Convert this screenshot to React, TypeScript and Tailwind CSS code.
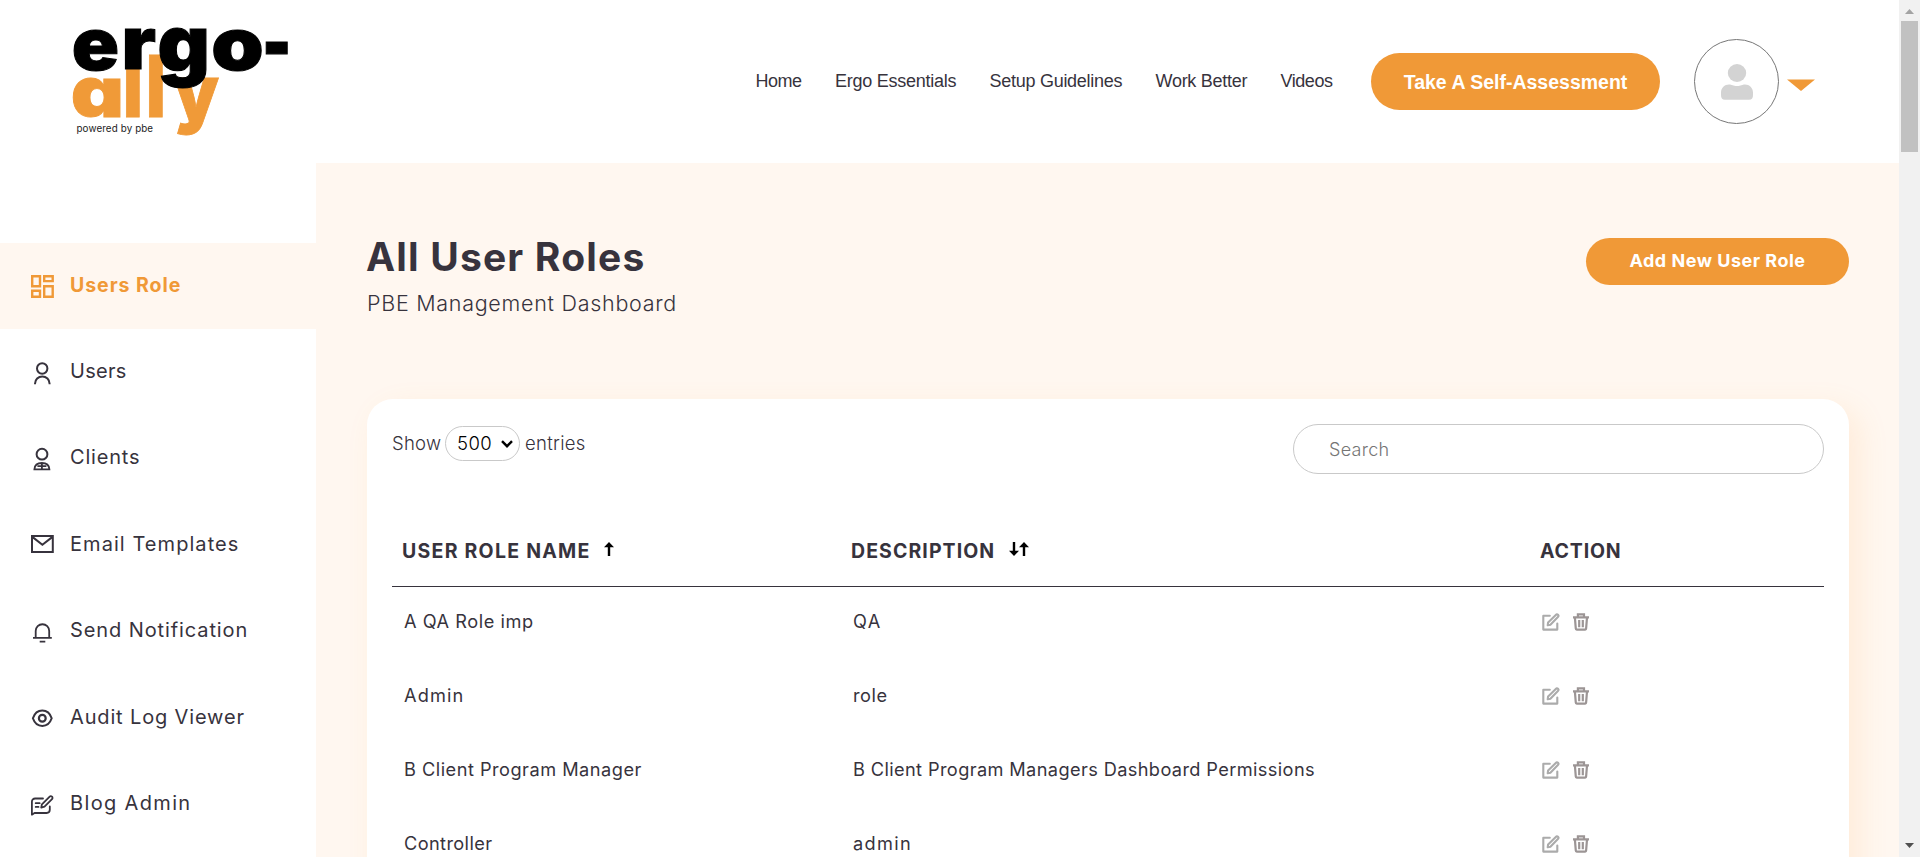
import type { ReactNode } from "react";

const Logo = () => (
  <svg width="240" height="130" viewBox="60 15 240 130" className="block overflow-visible font-['Inter'] font-black [font-feature-settings:'cv11']" role="img" aria-label="ergo-ally">
    <g fill="#f09a38" stroke="#f09a38" strokeWidth="0.8">
      <text transform="translate(70.8 117) scale(1.18 1)" fontSize="70">a</text>
      <text transform="translate(123 116.600) scale(.79 1.010)" fontSize="84">l</text>
      <text transform="translate(146 116.600) scale(.79 1.010)" fontSize="84">l</text>
      <text transform="translate(174 119.300) scale(1.01 1.08)" fontSize="70">y</text>
    </g>
    <g fill="#000" stroke="#000" strokeWidth="1">
      <text transform="translate(71.8 69.800) scale(1.070 1)" fontSize="73">e</text>
      <text transform="translate(121.4 69.200) scale(1.09 1)" fontSize="73">r</text>
      <text transform="translate(157.6 71.300) scale(1.11 1.06)" fontSize="73">g</text>
      <text transform="translate(211.2 69.800) scale(1.15 1)" fontSize="73">o</text>
      <text transform="translate(262 71.300) scale(.85 1.1)" fontSize="73">-</text>
    </g>
    <text x="76.5" y="131.800" fontSize="9.800" fontWeight="400" letterSpacing="0.120" fill="#222" className="[font-feature-settings:normal]">powered by pbe</text>
  </svg>
);

const Glyph = ({ children }: { children: ReactNode }) => (
  <svg width="24" height="24" viewBox="0 0 24 24" fill="none" stroke="currentColor" strokeWidth="2" className="shrink-0">
    {children}
  </svg>
);

const menu: { label: string; tracking: string; icon: ReactNode }[] = [
  {
    label: "Users Role",
    tracking: "tracking-[0.95px]",
    icon: (
      <Glyph>
        <path strokeWidth="2.4" d="M2.200 2.200h7.800v10H2.200zM14.200 2.200h8.500v4.900h-8.500zM2.200 16.800h7.800v5.900H2.200zM14.200 12.200h8.500v10.500h-8.500z" />
      </Glyph>
    ),
  },
  {
    label: "Users",
    tracking: "tracking-[0.3px]",
    icon: (
      <Glyph>
        <circle cx="12.2" cy="7.500" r="5.200" />
        <path d="M5 23.300v-.6a7.300 7.300 0 0 1 14.600 0v.6" />
      </Glyph>
    ),
  },
  {
    label: "Clients",
    tracking: "tracking-[0.800px]",
    icon: (
      <Glyph>
        <circle cx="12" cy="7.200" r="5.400" />
        <path d="M4.400 22.300c.3-4 3.200-6.300 7.500-6.300s7.200 2.300 7.500 6.300zM11.900 16v6M7.400 19.200h9" strokeWidth="1.800" />
      </Glyph>
    ),
  },
  {
    label: "Email Templates",
    tracking: "tracking-[1.060px]",
    icon: (
      <Glyph>
        <path d="M2 3.100h20.800v15.900H2zM2 3.600l10.400 8.200 10.400-8.200" />
      </Glyph>
    ),
  },
  {
    label: "Send Notification",
    tracking: "tracking-[0.900px]",
    icon: (
      <Glyph>
        <path d="M5.700 17.900V11a6.700 6.700 0 0 1 13.500 0v6.900M3 17.900h18.800M9.700 21.700h5.600" strokeWidth="1.800" />
      </Glyph>
    ),
  },
  {
    label: "Audit Log Viewer",
    tracking: "tracking-[0.850px]",
    icon: (
      <Glyph>
        <path d="M2.900 12.200C4.400 7.800 8 4.500 12.300 4.500s7.900 3.300 9.400 7.700c-1.500 4.400-5.100 7.700-9.400 7.700S4.400 16.600 2.900 12.200z" />
        <circle cx="12.300" cy="12.200" r="3.400" strokeWidth="2.200" />
      </Glyph>
    ),
  },
  {
    label: "Blog Admin",
    tracking: "tracking-[1.350px]",
    icon: (
      <Glyph>
        <path strokeLinecap="round" strokeLinejoin="round" strokeWidth="1.800" d="M13 5.500H5.100a3.200 3.200 0 0 0-3.200 3.200v13l2.600-1.700h12.100a3.200 3.200 0 0 0 3.200-3.200v-3.400M5.700 10.200h4M5.700 13.900h2.800M11.200 14.600l.7-3.300 7.500-7.500c.8-.8 1.900-.8 2.600-.1s.7 1.800 0 2.500l-7.500 7.500z" />
      </Glyph>
    ),
  },
];

const links = [
  { label: "Home", cls: "w-[79.5px] tracking-[-0.5px]" },
  { label: "Ergo Essentials", cls: "w-[154.5px] tracking-[-0.26px]" },
  { label: "Setup Guidelines", cls: "w-[166px] tracking-[-0.27px]" },
  { label: "Work Better", cls: "w-[125px] tracking-[-0.27px]" },
  { label: "Videos", cls: "w-[90.5px] tracking-[-0.44px]" },
];

const rows = [
  { name: "A QA Role imp", nt: "tracking-[0.550px]", desc: "QA", dt: "tracking-[1.5px]" },
  { name: "Admin", nt: "tracking-[1.1px]", desc: "role", dt: "tracking-[0.550px]" },
  { name: "B Client Program Manager", nt: "tracking-[0.490px]", desc: "B Client Program Managers Dashboard Permissions", dt: "tracking-[0.380px]" },
  { name: "Controller", nt: "tracking-[0.380px]", desc: "admin", dt: "tracking-[1.3px]" },
];

const EditIcon = () => (
  <svg width="18" height="18" viewBox="0 0 18 18" fill="none" stroke="#ababab" strokeWidth="2.100" strokeLinejoin="round" strokeLinecap="round">
    <path d="M7.800 2.800H1.300v13.800h14V10.500" />
    <path d="M5.700 12.300l.4-2.900 7.700-7.500c.7-.7 1.600-.7 2.200-.1s.6 1.500-.1 2.200l-7.500 7.700z" />
  </svg>
);

const TrashIcon = () => (
  <svg width="16" height="18" viewBox="0 0 16 18" fill="none" stroke="#9c9595" strokeWidth="2.200">
    <path d="M0 4.400h16M4.900 4V1.400h6.100V4M1.900 4.600l.9 11c0 .6.400 1 .9 1h8.500c.5 0 .9-.4.9-1l.9-11M6.200 7v7.200M9.800 7v7.200" />
  </svg>
);

const Arrow = ({ down = false }: { down?: boolean }) => (
  <svg width="10" height="14" viewBox="0 0 10 14" className={down ? "rotate-180" : ""}>
    <path d="M5 0l5 5.300H6.200V14H3.800V5.300H0z" fill="#000" />
  </svg>
);

export default function App() {
  return (
    <div className="flex h-[857px] w-full overflow-hidden bg-white font-['Inter',sans-serif] text-[#37333d]">
      <div className="flex min-w-0 flex-1 flex-col">
        <header className="flex h-[163px] shrink-0 items-center bg-white">
          <div className="ml-[60px] w-[240px] self-start pt-[15px]">
            <Logo />
          </div>
          <nav className="ml-[455.5px] flex pb-0.5 font-['Liberation_Sans',sans-serif] text-[18px] leading-6 whitespace-nowrap">
            {links.map((l) => (
              <a key={l.label} className={l.cls}>
                {l.label}
              </a>
            ))}
          </nav>
          <button className="h-[57px] w-[289px] rounded-full bg-[#f09937] pt-0.5 font-['Liberation_Sans',sans-serif] text-[19.500px] font-bold whitespace-nowrap text-white">
            Take A Self-Assessment
          </button>
          <div className="ml-[34px] flex size-[85px] items-center justify-center rounded-full border border-[#777]">
            <svg width="32" height="36" viewBox="0 0 32 36" fill="#d3d3d3">
              <ellipse cx="16" cy="9" rx="9.200" ry="9" />
              <path d="M0 31v-2.500C0 24 3.600 20.500 8 20.500c3 0 4 1.500 8 1.500s5-1.500 8-1.500c4.400 0 8 3.500 8 8V31c0 3-1 4.800-4 4.800H4c-3 0-4-1.800-4-4.800z" />
            </svg>
          </div>
          <svg width="28" height="12" viewBox="0 0 28 12" className="mt-[7px] ml-2">
            <path d="M0 .5h28L14 12z" fill="#f09937" />
          </svg>
        </header>

        <div className="flex min-h-0 flex-1">
          <aside className="w-[316px] shrink-0 bg-white pt-20">
            {menu.map((m, i) => (
              <a
                key={m.label}
                className={"flex h-[86.400px] items-center pl-[30px] whitespace-nowrap " + (i === 0 ? "bg-[#fff7f0] text-[19.500px] font-bold text-[#f09937]" : "text-[20px] font-normal")}
              >
                {m.icon}
                <span className={"ml-4 pb-[3px] leading-6 " + m.tracking}>{m.label}</span>
              </a>
            ))}
          </aside>

          <main className="flex min-w-0 flex-1 flex-col bg-[#fff7f0] pr-[50px] pl-[51px]">
            <div className="flex h-[236px] shrink-0 justify-between pt-[69px]">
              <div className="whitespace-nowrap">
                <h1 className="-ml-px pt-px text-[39px] leading-[48px] font-bold tracking-[1.180px]">All User Roles</h1>
                <p className="mt-[7px] text-[21.500px] leading-[30px] font-light tracking-[0.720px]">PBE Management Dashboard</p>
              </div>
              <button className="mt-1.5 h-[47px] w-[263px] rounded-full bg-[#f09937] pb-[3px] text-[18px] font-bold tracking-[0.500px] text-white">Add New User Role</button>
            </div>

            <section className="h-[600px] shrink-0 rounded-[26px] bg-white px-[25px] pt-[25px] shadow-[10px_10px_30px_rgba(255,160,60,0.13)]">
              <div className="flex items-start justify-between">
                <label className="mt-0.5 flex items-center text-[18.500px] font-light">
                  <span className="w-[53px] tracking-[0.250px]">Show</span>
                  <span className="flex h-[35px] w-[75px] items-center justify-between rounded-full border border-[#c9c9c9] pr-1.5 pl-[11px] text-black">
                    <span className="tracking-[0.400px]">500</span>
                    <svg width="12" height="8" viewBox="0 0 12 8" fill="none" stroke="#000" strokeWidth="2.400">
                      <path d="M1 1.200l5 5 5-5" />
                    </svg>
                  </span>
                  <span className="ml-[5px] tracking-[0.300px]">entries</span>
                </label>
                <input
                  placeholder="Search"
                  className="h-[50px] w-[531px] rounded-full border border-[#c9c9c9] bg-white px-[35px] text-[18px] font-light tracking-[0.300px] placeholder:text-[#757575]"
                />
              </div>

              <div className="mt-10 grid h-[73px] grid-cols-[449px_689px_1fr] items-center border-b border-[#37333d] pt-[3px] pl-2.5 text-[19.500px] font-bold whitespace-nowrap">
                <div className="flex items-center">
                  <span className="w-[202px] tracking-[1.250px]">USER ROLE NAME</span>
                  <span className="-mt-1.5">
                    <Arrow />
                  </span>
                </div>
                <div className="flex items-center">
                  <span className="w-[158px] tracking-[1.080px]">DESCRIPTION</span>
                  <span className="-mt-1.5 flex">
                    <Arrow down />
                    <Arrow />
                  </span>
                </div>
                <div className="tracking-[0.820px]">ACTION</div>
              </div>

              {rows.map((r) => (
                <div key={r.name} className="grid h-[73.800px] grid-cols-[449px_689px_1fr] items-center pb-[3px] pl-3 text-[18.200px] whitespace-nowrap">
                  <span className={"pb-px " + r.nt}>{r.name}</span>
                  <span className={"pb-px " + r.dt}>{r.desc}</span>
                  <span className="flex items-center gap-[13px]">
                    <EditIcon />
                    <TrashIcon />
                  </span>
                </div>
              ))}
            </section>
          </main>
        </div>
      </div>

      <div className="flex w-[21px] shrink-0 flex-col items-center bg-[#f1f1f1]">
        <svg width="9" height="5" viewBox="0 0 9 5" className="mt-[9px]">
          <path d="M4.500 0L9 5H0z" fill="#a3a3a3" />
        </svg>
        <div className="mt-[7px] h-[131px] w-[17px] bg-[#c1c1c1]" />
        <svg width="9" height="5" viewBox="0 0 9 5" className="mt-auto mb-[9px]">
          <path d="M4.500 5L9 0H0z" fill="#505050" />
        </svg>
      </div>
    </div>
  );
}
